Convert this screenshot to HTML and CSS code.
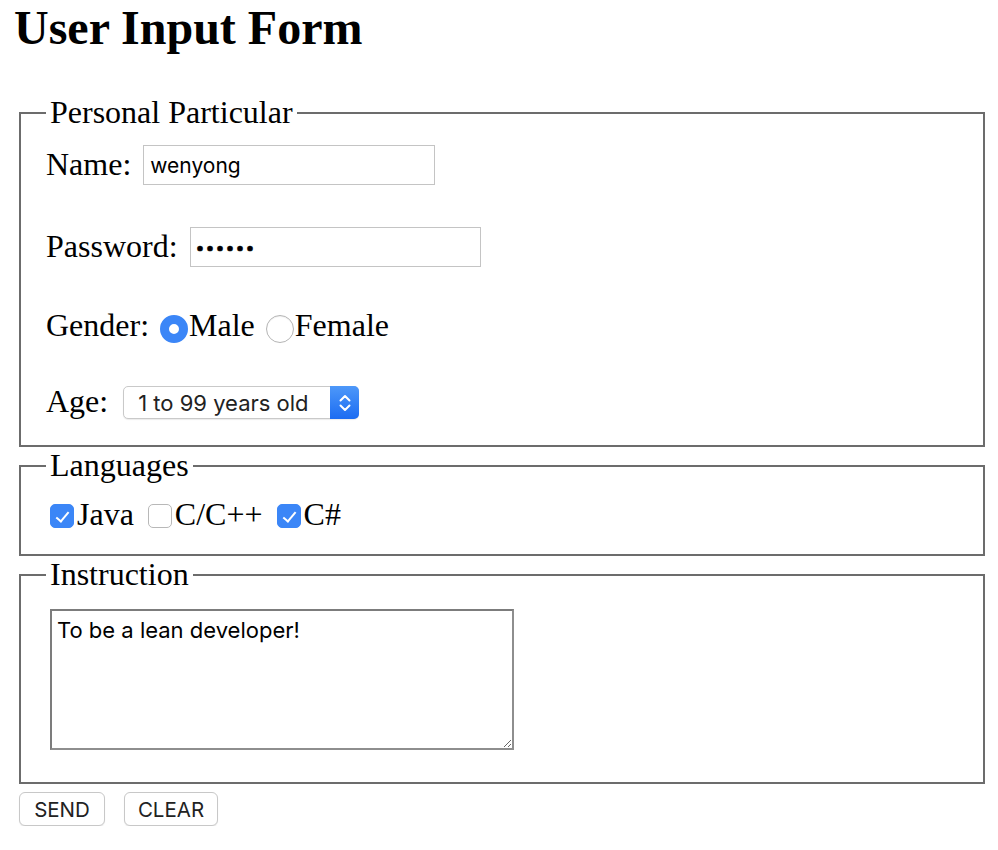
FILE: index.html
```html
<!DOCTYPE html>
<html lang="en">
<head>
<meta charset="utf-8">
<title>User Input Form</title>
<link rel="stylesheet" href="styles.css">
</head>
<body>
<h1 class="title">User Input Form</h1>
<form class="form">
  <fieldset class="group group-personal">
    <legend class="legend">Personal Particular</legend>
    <div class="row row-name">
      <label class="lbl" for="name">Name:</label>
      <input class="text-input name-input" id="name" type="text" value="wenyong">
    </div>
    <div class="row row-pass">
      <label class="lbl" for="pass">Password:</label>
      <input class="text-input pass-input" id="pass" type="password" value="123456">
    </div>
    <div class="row row-gender">
      <span class="lbl">Gender:</span>
      <label class="opt opt-male"><input class="radio" type="radio" name="gender" checked>Male</label>
      <label class="opt opt-female"><input class="radio" type="radio" name="gender">Female</label>
    </div>
    <div class="row row-age">
      <label class="lbl" for="age">Age:</label>
      <span class="select-wrap">
        <select class="select" id="age"><option>1 to 99 years old</option></select>
        <span class="select-arrow">
          <svg width="14" height="24" viewBox="0 0 14 24"><path d="M2.5 9.5 L7 5 L11.5 9.5" fill="none" stroke="#fff" stroke-width="2" stroke-linecap="round" stroke-linejoin="round"/><path d="M2.5 14.5 L7 19 L11.5 14.5" fill="none" stroke="#fff" stroke-width="2" stroke-linecap="round" stroke-linejoin="round"/></svg>
        </span>
      </span>
    </div>
  </fieldset>
  <fieldset class="group group-lang">
    <legend class="legend">Languages</legend>
    <div class="checks">
      <label class="chk-opt chk-java"><input class="check" type="checkbox" checked>Java</label>
      <label class="chk-opt chk-c"><input class="check" type="checkbox">C/C++</label>
      <label class="chk-opt chk-cs"><input class="check" type="checkbox" checked>C#</label>
    </div>
  </fieldset>
  <fieldset class="group group-instr">
    <legend class="legend">Instruction</legend>
    <textarea class="textarea">To be a lean developer!</textarea>
  </fieldset>
  <div class="buttons">
    <button class="btn btn-send" type="button">SEND</button>
    <button class="btn btn-clear" type="button">CLEAR</button>
  </div>
</form>
</body>
</html>
```
FILE: styles.css
```css
* { box-sizing: border-box; }

body {
  margin: 0;
  background: #fff;
  color: #000;
  font-family: "Liberation Serif", "Times New Roman", serif;
  font-size: 32px;
}

.title {
  margin: 0 0 38px 14px;
  font-size: 48px;
  line-height: 56px;
  font-weight: bold;
}

.form {
  padding-left: 19px;
  width: 985px;
}

.group {
  margin: 0;
  min-width: 0;
  border: 2px solid #6c6c6c;
  padding: 0 20px 0 25px;
}

.legend {
  margin-left: 0;
  padding: 0 4px;
  line-height: 37px;
}

.row {
  display: flex;
  align-items: flex-start;
}

.lbl {
  line-height: 37px;
}

.text-input {
  height: 40px;
  border: 1px solid #c4c4c4;
  border-radius: 0;
  padding: 0 6px;
  font-family: "Inter", "Liberation Sans", sans-serif;
  font-size: 21px;
  color: #000;
  background: #fff;
  outline: none;
}

.row-name { margin-top: 12px; }
.row-name .lbl { margin-top: 3px; }
.name-input { width: 292px; margin: 2px 0 0 12px; }

.row-pass { margin-top: 41px; }
.row-pass .lbl { margin-top: 2px; }
.pass-input {
  width: 291px;
  margin: 1px 0 0 12px;
  padding-left: 5px;
  font-size: 16px;
  letter-spacing: 1px;
  -webkit-text-stroke: 0.7px #000;
}

.row-gender { margin-top: 40px; }
.opt {
  display: flex;
  align-items: flex-start;
  line-height: 37px;
}
.opt-male { margin-left: 11px; }
.opt-female { margin-left: 11px; }

.radio {
  appearance: none;
  -webkit-appearance: none;
  width: 28px;
  height: 28px;
  margin: 8px 1px 0 0;
  border-radius: 50%;
  border: 1px solid #b5b5b5;
  background: #fff;
  box-shadow: inset 0 1px 1px rgba(0, 0, 0, 0.06);
}
.radio:checked {
  border: 9px solid #3b86f7;
  box-shadow: none;
}

.row-age { margin-top: 37px; }
.row-age .lbl { margin-top: 2px; }
.select-wrap {
  position: relative;
  display: flex;
  margin: 5px 0 0 15px;
  height: 33px;
}
.select {
  appearance: none;
  -webkit-appearance: none;
  width: 236px;
  height: 33px;
  border: 1px solid #c9c9c9;
  border-radius: 5px;
  padding: 0 32px 0 14px;
  background: #fff;
  font-family: "Inter", "Liberation Sans", sans-serif;
  font-size: 22px;
  color: #222;
  box-shadow: 0 1px 1px rgba(0, 0, 0, 0.08);
}
.select-arrow {
  position: absolute;
  top: 0;
  right: 0;
  width: 29px;
  height: 33px;
  border-radius: 0 5px 5px 0;
  background: linear-gradient(#4d98f9, #1c6cf2);
  display: flex;
  align-items: center;
  justify-content: center;
}

.group-personal { padding-bottom: 25px; }

.checks {
  display: flex;
  align-items: flex-start;
  margin-top: 12px;
  line-height: 37px;
}
.chk-opt {
  display: flex;
  align-items: flex-start;
}
.chk-java { margin-left: 4px; }
.chk-c { margin-left: 14px; }
.chk-cs { margin-left: 14px; }

.check {
  appearance: none;
  -webkit-appearance: none;
  position: relative;
  width: 24px;
  height: 24px;
  margin: 8px 3px 0 0;
  border-radius: 5px;
  border: 1px solid #b8b8b8;
  background: #fff;
}
.check:checked {
  border-color: #3b86f7;
  background: #3b86f7;
}
.check:checked::after {
  content: "";
  position: absolute;
  left: 8px;
  top: 4px;
  width: 5px;
  height: 11px;
  border-right: 2px solid #fff;
  border-bottom: 2px solid #fff;
  transform: rotate(40deg);
}

.group-lang { padding-bottom: 21px; }

.textarea {
  display: block;
  width: 464px;
  height: 141px;
  margin: 16px 0 0 4px;
  border: 2px solid #8e8e8e;
  border-top-color: #7c7c7c;
  border-left-color: #7c7c7c;
  padding: 6px 5px;
  font-family: "Inter", "Liberation Sans", sans-serif;
  font-size: 22px;
  line-height: 27px;
  color: #000;
  outline: none;
}

.group-instr { padding-bottom: 32px; }

.buttons {
  display: flex;
  gap: 19px;
  margin-top: 8px;
}
.btn {
  height: 34px;
  padding: 0;
  border: 1px solid #c8c8c8;
  border-radius: 6px;
  background: #fff;
  box-shadow: 0 1px 1px rgba(0, 0, 0, 0.08);
  font-family: "Inter", "Liberation Sans", sans-serif;
  font-size: 20.5px;
  color: #222;
  text-align: center;
}
.btn-send { width: 86px; }
.btn-clear { width: 94px; }
```
